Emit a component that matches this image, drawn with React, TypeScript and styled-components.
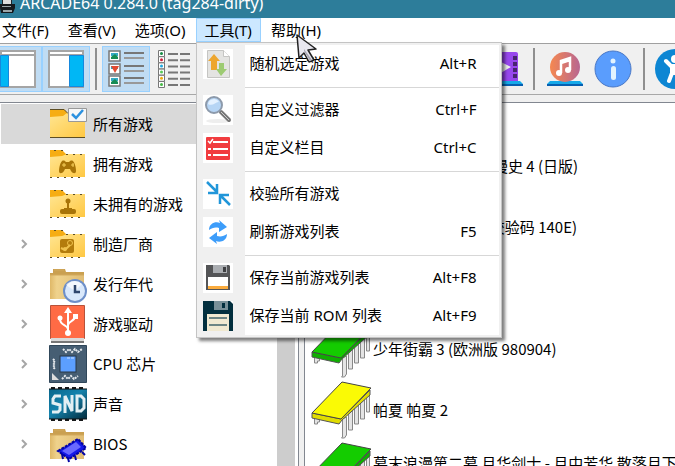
import React from "react";
import styled, { createGlobalStyle } from "styled-components";

const uiFont = `"Noto Sans", "Noto Sans CJK SC", sans-serif`;
const listFont = `"Noto Sans CJK SC", "Noto Sans", sans-serif`;

const GlobalStyle = createGlobalStyle`
  * { box-sizing: border-box; }
  body { margin: 0; overflow: hidden; background: #fff; }
  button { font: inherit; color: inherit; background: none; border: 0; padding: 0; margin: 0; }
  svg { display: block; flex: none; }
  ul { list-style: none; margin: 0; padding: 0; }
`;

const Window = styled.div`
  display: flex;
  flex-direction: column;
  height: 100vh;
  overflow: hidden;
  font: 15px/20px ${uiFont};
  color: #000;
`;
const TitleBar = styled.header`
  display: flex;
  align-items: flex-end;
  gap: 4px;
  height: 18px;
  flex: none;
  overflow: hidden;
  background: #2d7d9a;
  color: #fff;
`;
const Title = styled.span`
  font-size: 16px;
  line-height: 30px;
  white-space: nowrap;
`;
const MenuBar = styled.nav`
  display: flex;
  gap: 1px;
  height: 25px;
  flex: none;
  margin-left: -7px;
  background: #fff;
`;
const MenuSlot = styled.div`
  position: relative;
`;
const MenuButton = styled.button<{ $open?: boolean }>`
  height: 24px;
  padding: 0 8px;
  border: 1px solid ${(p) => (p.$open ? "#99d1ff" : "transparent")};
  background: ${(p) => (p.$open ? "#cce8ff" : "transparent")};
  line-height: 20px;
  white-space: nowrap;
`;
const Popup = styled.div`
  position: absolute;
  z-index: 2;
  top: 24px;
  left: 0;
  width: 306px;
  padding: 2px;
  border: 1px solid #c4c4c4;
  background: #f0f0f0;
  box-shadow: 3px 3px 3px rgba(0, 0, 0, 0.5);
`;
const Command = styled.button`
  display: grid;
  grid-template-columns: 46px 1fr auto;
  align-items: stretch;
  width: 100%;
  height: 38px;
  text-align: left;
  line-height: 36px;
`;
const CommandIcon = styled.span`
  align-self: center;
  justify-self: start;
  margin-left: 4px;
  background: #fff;
`;
const CommandText = styled.span`
  padding-left: 5px;
  background: #fff;
  white-space: nowrap;
`;
const Shortcut = styled.kbd`
  padding-right: 22px;
  background: #fff;
  font: inherit;
`;
const Divider = styled.div`
  height: 8px;
  margin-left: 46px;
  padding: 4px 0 3px;
  background: #d7d7d7 content-box;
  box-shadow: inset 0 4px #fff, inset 0 -3px #fff;
`;
const Pointer = styled.span`
  position: absolute;
  z-index: 3;
  top: 16px;
  left: 34px;
  pointer-events: none;
`;
const ToolBar = styled.div`
  display: flex;
  align-items: center;
  height: 52px;
  flex: none;
  overflow: hidden;
  border-top: 1px solid #a0a0a0;
  border-bottom: 1px solid #a8a8a8;
  background: #f0f0f0;
`;
const ToolButton = styled.button<{ $on?: boolean; $first?: boolean }>`
  display: flex;
  align-items: center;
  justify-content: center;
  flex: none;
  width: 48px;
  height: 46px;
  margin-left: ${(p) => (p.$first ? "-6px" : "0")};
  border: 1px solid ${(p) => (p.$on ? "#99d1ff" : "transparent")};
  background: ${(p) => (p.$on ? "#c0dcf3" : "transparent")};
`;
const ToolRule = styled.span<{ $wide?: boolean }>`
  flex: none;
  width: 2px;
  height: 42px;
  margin: 0 ${(p) => (p.$wide ? "6px" : "5px")};
  background: #8f8f8f;
`;
const ToolSpace = styled.span`
  flex: 0 0 281px;
`;
const Panes = styled.main`
  display: flex;
  flex: 1;
  min-height: 0;
  padding-top: 7px;
  background: #f0f0f0;
  font-family: ${listFont};
`;
const Tree = styled.aside`
  display: flex;
  flex: 0 0 299px;
  overflow: hidden;
  border-top: 1px solid #828790;
  border-right: 1px solid #828790;
  background: #fff;
`;
const Folders = styled.ul`
  flex: 1;
  && { padding: 1px 0 0 1px; }
`;
const Folder = styled.li<{ $selected?: boolean }>`
  display: flex;
  align-items: center;
  height: 40px;
  padding-left: 18px;
  background: ${(p) => (p.$selected ? "#d9d9d9" : "transparent")};
  white-space: nowrap;
`;
const Twisty = styled.span`
  width: 10px;
  margin-right: 20px;
`;
const FolderName = styled.span`
  padding-left: 6px;
`;
const ScrollTrack = styled.div`
  width: 18px;
  margin-right: 3px;
  background: #cdcdcd;
`;
const Games = styled.ul`
  flex: 1;
  min-width: 0;
  overflow: hidden;
  border-top: 1px solid #828790;
  border-left: 1px solid #828790;
  background: #fff;
  && {
    margin-left: 5px;
    padding: 32px 0 0 6px;
  }
`;
const Game = styled.li`
  display: flex;
  align-items: center;
  height: 61px;
  line-height: 16px;
  white-space: nowrap;
`;
const GameName = styled.span`
  padding-left: 1px;
`;
const NameLine = styled.span`
  display: block;
`;

const PadIcon = () => (
  <path fill="#a87408" d="M13 16c2-1 3 0 4 1h3c1-1 2-2 4-1 2 2 3 7 3 10 0 3-3 3-5 0l-1-2h-5l-1 2c-2 3-5 3-5 0 0-3 1-8 3-10Z" />
);

const FolderIcon = ({ kind }: { kind: string }) => (
  <svg width="38" height="38" viewBox="0 0 38 38">
    <defs>
      <linearGradient id="fold" x1="0" y1="0" x2="1" y2="1">
        <stop offset="0" stopColor="#ffe591" /><stop offset="1" stopColor="#ffc843" />
      </linearGradient>
      <linearGradient id="tan" x1="0" y1="0" x2="1" y2="0">
        <stop offset="0" stopColor="#dfb868" /><stop offset=".2" stopColor="#efd28c" /><stop offset="1" stopColor="#e0bd75" />
      </linearGradient>
      <linearGradient id="snd" x1="0" y1="0" x2="1" y2="1">
        <stop offset="0" stopColor="#07658a" /><stop offset=".45" stopColor="#1583ad" /><stop offset="1" stopColor="#032838" />
      </linearGradient>
    </defs>
    {(kind === "all" || kind === "pad" || kind === "stick" || kind === "maker") && (
      <>
        <path fill="#f6ad13" d={kind === "all" ? "M1 4h14l4 5H36v8H1Z" : "M1 5h12l5 5H36v8H1Z"} />
        <path fill="url(#fold)" d={kind === "all" ? "M1 12l13-1 4-3h18v24H1Z" : "M1 12l12-1 5-2h18v23H1Z"} />
        <path stroke="#5d4e24" fill="none" d={kind === "all" ? "M1 4.500h14l4 4M1 32.500h35" : "M5 5.500h9l3 4h18M1 32.500h35"} strokeDasharray={kind === "all" ? undefined : "2 5"} />
      </>
    )}
    {kind === "all" && <><path fill="#f7f7f7" stroke="#999" d="M19.500 3.500h18v13h-18Z" /><path fill="none" stroke="#2c91df" strokeWidth="2.500" d="m23 9 4 4 7-8" /></>}
    {kind === "pad" && <><PadIcon /><path stroke="#f7cf5b" d="M13 20h4m-2-2v4m8-4h0M22 20h3m-1-2v4" /></>}
    {kind === "stick" && <g fill="#a87408"><circle cx="19" cy="16" r="2.500" /><path d="M18 17h2v7h-2Z" /><path d="M15 23h8v2h-8Z" /><rect x="11" y="24" width="16" height="5" rx="2" /></g>}
    {kind === "maker" && <><rect x="11" y="14" width="14" height="14" rx="2" fill="#b37c0c" /><path stroke="#efc24d" strokeWidth="2" fill="none" d="m12 23 4 2 5-5" /><circle cx="21" cy="18" r="2.500" fill="none" stroke="#efc24d" /><circle cx="16" cy="24" r="2" fill="#efc24d" /></>}
    {(kind === "year" || kind === "bios") && (
      <>
        <path fill="#caa050" d="M4 4h12l1 3h18v27H1V8h3Z" /><path fill="url(#tan)" d="M1 10h34v24H1Z" /><path stroke="#d2a95d" d="M5 5h10M1 10h34" />
      </>
    )}
    {kind === "year" && <><circle cx="26" cy="26" r="11" fill="#d9e8fb" stroke="#6d8fc9" strokeWidth="2" /><path d="M17 20a11 11 0 0 1 16-1l-7 7Z" fill="#fff" opacity=".7" /><path stroke="#2f466d" strokeWidth="2.500" fill="none" d="M26 20v7h5" /></>}
    {kind === "bios" && <><path fill="#1519e8" stroke="#0204a5" strokeWidth="2" strokeDasharray="3 1" d="m9 26 20-12 8 9-17 11Z" /><path fill="#6969ff" d="m13 26 14-9 5 5-12 8Z" /><path stroke="#0204a5" strokeWidth="2" d="m13 29 1 5m5-1 1 4m6-6 1 4m6-8 3 3" /></>}
    {kind === "driver" && (
      <>
        <path fill="#ff6b45" stroke="#b8523a" d="M1.500.5h34v33h-34Z" /><path fill="#d9d9d9" d="M2 33h33v3H2Z" /><path fill="#777" d="M2 36h33v2H2Z" />
        <path fill="none" stroke="#fff" strokeWidth="2" d="M19 29V5M19 24c-1-5-8-3-8-10m8 6c1-5 7-3 7-9" /><path fill="#fff" d="m19 2 4 6h-8Z" /><circle cx="19" cy="28" r="3" fill="#fff" /><circle cx="11" cy="13" r="2.500" fill="#fff" /><path fill="#fff" d="M24 9h5v5h-5Z" />
      </>
    )}
    {kind === "cpu" && (
      <>
        <path fill="#465e73" stroke="#30475a" d="M.5.500h37v37H.5Z" /><rect x="11" y="11" width="16" height="16" fill="#5c9fff" stroke="#263746" />
        <path fill="none" stroke="#e5e9ed" strokeWidth="2" strokeDasharray="2 1" d="m14 4 3 3 3-3 3 3 3-3 3 3 4-3M13 34l3-3 3 3 3-3 3 3 4-3M4 14l2 2-2 2 2 2-2 2 2 2" /><path fill="#ddd" d="M3 28v7h7Z" /><path stroke="#cde2ff" d="M18 13h7" strokeDasharray="3 1" />
      </>
    )}
    {kind === "sound" && (
      <>
        <path stroke="#17191a" strokeWidth="4" strokeDasharray="4 3" d="M2 4h35M2 34h35" /><rect x="-1" y="4" width="40" height="30" rx="1" fill="url(#snd)" stroke="#111" />
        <path fill="none" stroke="#e3eff3" strokeWidth="3" d="M12 11H6l-2 3v4l7 2v5l-2 2H3M16 28V11l7 15V10M28 11v15h4l3-3v-9l-3-3Z" />
      </>
    )}
  </svg>
);

const Chevron = () => (
  <svg width="10" height="12" viewBox="0 0 10 12"><path d="m3 2 4 4-4 4" fill="none" stroke="#a6a6a6" strokeWidth="2" /></svg>
);

const CommandArt = ({ kind }: { kind: string }) => (
  <svg width="30" height="30" viewBox="0 0 30 30">
    {kind === "random" && <><path fill="#e4e4e2" stroke="#c5c5c3" d="M4.500 1.500h16l6 6v21h-22Z" /><path fill="#fff" stroke="#c5c5c3" d="M20.500 1.500v6h6" /><path fill="#eda62e" d="m11 5 6 7h-3v9H8v-9H5Z" /><path fill="#9dcb72" d="M16 14h5v6h3l-6 7-5-7h3Z" /></>}
    {kind === "filter" && <><ellipse cx="15" cy="26" rx="12" ry="2" fill="#eee" /><path stroke="#777" strokeWidth="4" strokeLinecap="round" d="m18 17 8 8" /><path stroke="#ccc" d="m18 17 8 8" /><circle cx="11" cy="10" r="8" fill="#b6d5f5" stroke="#8d9aab" strokeWidth="2" /><path fill="#e4f1ff" d="M5 9a6 6 0 0 1 11-2c-3-1-6 5-11 2Z" /></>}
    {kind === "columns" && <><rect x="3" y="4" width="24" height="23" rx="1" fill="#f13c3f" /><path stroke="#fff" strokeWidth="2" d="M10 9h15M10 16h15M10 22h15M5 16h3M5 22h3" /><path stroke="#fff" strokeWidth="1.500" fill="none" d="m5 8 2 2 3-4" /></>}
    {kind === "verify" && <path fill="none" stroke="#2196d9" strokeWidth="2.500" d="m4 3 10 10M14 5v9H5M27 26 17 16M17 25v-9h9" />}
    {kind === "refresh" && <g fill="#3d9dfa"><path d="M6 13C6 6 13 4 17 6l-1-3 8 7-8 5v-4c-4-1-7 0-10 2Z" /><path d="M24 17c0 7-7 9-11 7l1 3-8-6 8-6v4c4 1 7 0 10-2Z" /></g>}
    {kind === "save" && <><path fill="#545557" d="M3 2h23l1 1v24H3Z" /><path fill="#aaadb1" d="M10 2h14v8H10Z" /><path fill="#3d3e41" d="M20 4h3v5h-3Z" /><path fill="#fff" d="M5 14h20v12H5Z" /><path fill="#faab3d" d="M5 23h20v3H5Z" /></>}
    {kind === "saverom" && <><path fill="#022f3e" d="M0 0h27l3 3v27H0Z" /><path fill="#789098" d="M11 0h14v9H11Z" /><path fill="#022f3e" d="M19 2h3v5h-3Z" /><path fill="#f0e9d1" d="M4 13h22v17H4Z" /><path stroke="#6c8584" strokeWidth="2" d="M6 17h18M6 24h18" /></>}
  </svg>
);

const PaneArt = ({ right }: { right?: boolean }) => (
  <svg width="36" height="38" viewBox="0 0 36 38">
    <path fill="#fff" stroke="#a5a5a5" strokeWidth="2" d="M1 1h34v36H1ZM1 5h34" />
    {right ? <path fill="#00b7f5" stroke="#1688dd" d="M21.500 5.500h14v31h-14Z" /> : <path fill="#00b7f5" stroke="#1688dd" d="M.5 5.500h8v31h-8Z" />}
  </svg>
);

const LargeListArt = () => (
  <svg width="37" height="38" viewBox="0 0 37 38">
    {[1, 14, 26].map((y, i) => (
      <g key={y}>
        <path fill="#fff" stroke="#777" strokeWidth="1.500" d={`M1 ${y}h11v10H1Z`} />
        <path fill="#35a9c5" d={`M3 ${y + 2}h7v3H3Z`} />
        <path fill={i === 1 ? "#e34a31" : "#178c55"} d={i === 1 ? "M3 16h8l-4 7Z" : `M3 ${y + 8}v-2l4-3 3 3v2Z`} />
        <path stroke="#777" strokeWidth="2" d={`M16 ${y + 2}h20`} /><path stroke="#999" strokeWidth="2" d={`M16 ${y + 7}h20`} />
      </g>
    ))}
  </svg>
);

const SmallListArt = () => (
  <svg width="34" height="40" viewBox="0 0 34 40">
    {["#178c45", "#d21f3c", "#22a8e0", "#57c957", "#f0ad14", "#45b945"].map((c, i) => (
      <g key={c}>
        <path fill="#fff" stroke="#777" d={`M1.500 ${1.5 + i * 6.2}h6v6h-6Z`} /><circle cx="4.500" cy={4.5 + i * 6.2} r="1.500" fill={c} />
        <path stroke="#777" strokeWidth="2" d={`M11 ${5 + i * 6.2}h10M23 ${5 + i * 6.2}h10`} />
      </g>
    ))}
  </svg>
);

const FilmArt = () => (
  <svg width="40" height="36" viewBox="0 0 40 36">
    <rect x="5" y="1" width="30" height="31" rx="2" fill="#9747ed" /><path fill="#eee" d="m16 10 12 6-12 7Z" />
    <path stroke="#47246f" strokeWidth="4" strokeDasharray="4 2" d="M32 5v24M8 5v24" /><path fill="#16a9e9" d="M3 30h34l3 3H0Z" /><path fill="#075fb0" d="M0 33h40v2H0Z" />
  </svg>
);

const MusicArt = () => (
  <svg width="36" height="36" viewBox="0 0 36 36">
    <defs><linearGradient id="music" x1="0" x2="1"><stop stopColor="#f58850" /><stop offset="1" stopColor="#b86691" /></linearGradient></defs>
    <path fill="#16a9e9" d="M3 30h30l3 3H0Z" /><path fill="#075fb0" d="M0 33h36v2H0Z" /><circle cx="18" cy="16" r="15" fill="url(#music)" />
    <path fill="none" stroke="#fff" strokeWidth="2.500" d="M14 22V10l9-3v12M14 12l9-3" /><circle cx="12" cy="22" r="3" fill="#fff" /><circle cx="21" cy="19" r="3" fill="#fff" />
  </svg>
);

const InfoArt = () => (
  <svg width="38" height="38" viewBox="0 0 38 38"><circle cx="19" cy="19" r="18" fill="#5a9dfd" stroke="#4a78c6" /><circle cx="19" cy="11" r="2.500" fill="#e2f3fe" /><rect x="17" y="16" width="5" height="14" rx="2.500" fill="#e2f3fe" /></svg>
);

const PersonArt = () => (
  <svg width="42" height="42" viewBox="0 0 42 42"><circle cx="21" cy="21" r="20" fill="#0d86d3" /><circle cx="21" cy="11" r="4" fill="#fff" /><path fill="none" stroke="#fff" strokeWidth="4" strokeLinecap="round" strokeLinejoin="round" d="m12 13 5 5h8l5-5M18 18v7l-3 8M24 18v7l3 8" /><path fill="#fff" d="M16 17h10v10H16Z" /></svg>
);

const ChipArt = ({ color, edge }: { color: string; edge: string }) => (
  <svg width="61" height="60" viewBox="0 0 61 60">
    <g fill="#e4e4e4" stroke="#888">
      <path d="M3.500 34v10h3v-2h2v-8ZM31.500 39v18l-1 1h3l2-3V37ZM37.500 34v16h4V30ZM43.500 28v16h4V25ZM49.500 22v17h4V19ZM55.500 14v18h3V12Z" />
    </g>
    <path fill={edge} stroke="#555" d="M1 33v5l27 6 3-4 28-25v-5L30 39Z" />
    <path fill={color} stroke="#444" d="M31 2 60 8 30 39 1 33Z" />
  </svg>
);

const CabinetArt = () => (
  <svg width="16" height="18" viewBox="0 0 16 18"><path fill="#20252a" d="M2 0h10v5H2Z" /><path fill="#ddd" d="M3 0h8v4H3Z" /><path fill="#15191d" d="M0 4h15v4l-2 5H1L0 8Z" /><path fill="#9aa5a9" d="M2 6h9v1H2ZM3 10h9v2H3Z" /></svg>
);

const PointerArt = () => (
  <svg width="25" height="32" viewBox="0 0 25 32"><path fill="#e8e7ef" stroke="#222" strokeWidth="1.500" strokeLinejoin="round" d="m1 1 19 14-8 1 6 10-5 2-5-9-5 5Z" /><path fill="#aaa8b5" d="m8 15 8 11-2 1-6-10Z" /></svg>
);

const commands: ([string, string, string] | null)[] = [
  ["random", "随机选定游戏", "Alt+R"],
  null,
  ["filter", "自定义过滤器", "Ctrl+F"],
  ["columns", "自定义栏目", "Ctrl+C"],
  null,
  ["verify", "校验所有游戏", ""],
  ["refresh", "刷新游戏列表", "F5"],
  null,
  ["save", "保存当前游戏列表", "Alt+F8"],
  ["saverom", "保存当前 ROM 列表", "Alt+F9"],
];

const folders: [string, string, boolean][] = [
  ["all", "所有游戏", false],
  ["pad", "拥有游戏", false],
  ["stick", "未拥有的游戏", false],
  ["maker", "制造厂商", true],
  ["year", "发行年代", true],
  ["driver", "游戏驱动", true],
  ["cpu", "CPU 芯片", true],
  ["sound", "声音", true],
  ["bios", "BIOS", true],
];

const games: { lines: string[]; yellow?: boolean }[] = [
  { lines: ["偶像麻将俱乐部浪漫史 4 (日版)"] },
  { lines: ["少年街霸 (世界版 校验码 140E)"] },
  { lines: ["少年街霸 3"] },
  { lines: ["少年街霸 3 (欧洲版 980904)"] },
  { lines: ["帕夏 帕夏 2"], yellow: true },
  { lines: ["幕末浪漫第二幕 月华剑士 - 月中芳华 散落月下", "飞花"] },
];

export default function App() {
  return (
    <Window>
      <GlobalStyle />
      <TitleBar>
        <CabinetArt />
        <Title>ARCADE64 0.284.0 (tag284-dirty)</Title>
      </TitleBar>
      <MenuBar>
        {["文件(F)", "查看(V)", "选项(O)"].map((name) => (
          <MenuSlot key={name}><MenuButton>{name}</MenuButton></MenuSlot>
        ))}
        <MenuSlot>
          <MenuButton $open aria-expanded>工具(T)</MenuButton>
          <Popup>
            {commands.map((c, i) =>
              c ? (
                <Command key={c[0]}>
                  <CommandIcon><CommandArt kind={c[0]} /></CommandIcon>
                  <CommandText>{c[1]}</CommandText>
                  <Shortcut>{c[2]}</Shortcut>
                </Command>
              ) : (
                <Divider key={i} />
              )
            )}
          </Popup>
        </MenuSlot>
        <MenuSlot>
          <MenuButton>帮助(H)</MenuButton>
          <Pointer><PointerArt /></Pointer>
        </MenuSlot>
      </MenuBar>
      <ToolBar>
        <ToolButton $on $first aria-label="左侧窗格"><PaneArt /></ToolButton>
        <ToolButton $on aria-label="右侧窗格"><PaneArt right /></ToolButton>
        <ToolRule />
        <ToolButton $on aria-label="大图标"><LargeListArt /></ToolButton>
        <ToolButton aria-label="小图标"><SmallListArt /></ToolButton>
        <ToolSpace />
        <ToolButton aria-label="视频"><FilmArt /></ToolButton>
        <ToolRule $wide />
        <ToolButton aria-label="音乐"><MusicArt /></ToolButton>
        <ToolButton aria-label="信息"><InfoArt /></ToolButton>
        <ToolRule $wide />
        <ToolButton aria-label="辅助"><PersonArt /></ToolButton>
      </ToolBar>
      <Panes>
        <Tree>
          <Folders>
            {folders.map(([kind, name, nested]) => (
              <Folder key={kind} $selected={kind === "all"}>
                <Twisty>{nested && <Chevron />}</Twisty>
                <FolderIcon kind={kind} />
                <FolderName>{name}</FolderName>
              </Folder>
            ))}
          </Folders>
          <ScrollTrack />
        </Tree>
        <Games>
          {games.map((g) => (
            <Game key={g.lines[0]}>
              <ChipArt color={g.yellow ? "#fafa05" : "#14cc00"} edge={g.yellow ? "#e0dc00" : "#0fae00"} />
              <GameName>{g.lines.map((l) => <NameLine key={l}>{l}</NameLine>)}</GameName>
            </Game>
          ))}
        </Games>
      </Panes>
    </Window>
  );
}
